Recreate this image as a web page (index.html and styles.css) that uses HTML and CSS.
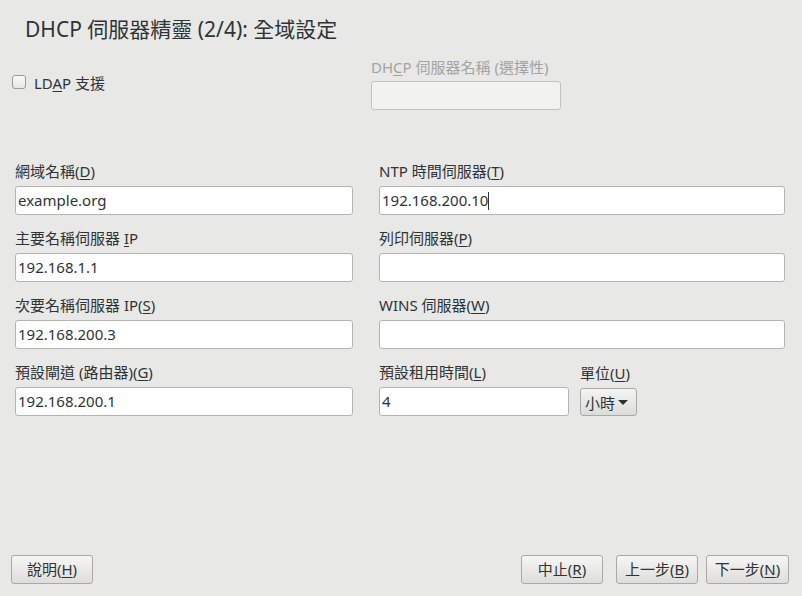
FILE: index.html
```html
<!DOCTYPE html>
<html>
<head>
<meta charset="utf-8">
<link rel="stylesheet" href="styles.css">
</head>
<body>
<div class="page">
  <h1 class="title">DHCP 伺服器精靈 (2/4): 全域設定</h1>
  <div class="top">
    <label class="check">
      <span class="box"></span>
      <span>LD<u>A</u>P 支援</span>
    </label>
    <div class="group disabled">
      <div class="label">DH<u>C</u>P 伺服器名稱 (選擇性)</div>
      <div class="field dfield"></div>
    </div>
  </div>
  <div class="form">
    <div class="col left">
      <div class="group">
        <div class="label">網域名稱(<u>D</u>)</div>
        <div class="field">example.org</div>
      </div>
      <div class="group">
        <div class="label">主要名稱伺服器 <u>I</u>P</div>
        <div class="field">192.168.1.1</div>
      </div>
      <div class="group">
        <div class="label">次要名稱伺服器 IP(<u>S</u>)</div>
        <div class="field">192.168.200.3</div>
      </div>
      <div class="group">
        <div class="label">預設閘道 (路由器)(<u>G</u>)</div>
        <div class="field">192.168.200.1</div>
      </div>
    </div>
    <div class="col right">
      <div class="group">
        <div class="label">NTP 時間伺服器(<u>T</u>)</div>
        <div class="field">192.168.200.10<span class="caret"></span></div>
      </div>
      <div class="group">
        <div class="label">列印伺服器(<u>P</u>)</div>
        <div class="field"></div>
      </div>
      <div class="group">
        <div class="label">WINS 伺服器(<u>W</u>)</div>
        <div class="field"></div>
      </div>
      <div class="lease-row">
        <div class="group lease">
          <div class="label">預設租用時間(<u>L</u>)</div>
          <div class="field">4</div>
        </div>
        <div class="group unit">
          <div class="label">單位(<u>U</u>)</div>
          <div class="combo">小時<span class="arrow"></span></div>
        </div>
      </div>
    </div>
  </div>
  <div class="buttons">
    <button class="btn">說明(<u>H</u>)</button>
    <div class="right-btns">
      <button class="btn">中止(<u>R</u>)</button>
      <button class="btn back">上一步(<u>B</u>)</button>
      <button class="btn next">下一步(<u>N</u>)</button>
    </div>
  </div>
</div>
</body>
</html>
```
FILE: styles.css
```css
html, body {
  margin: 0;
  padding: 0;
  background: #e8e8e7;
}
body {
  font-family: "Noto Sans", "Noto Sans CJK TC", sans-serif;
  font-size: 15px;
  color: #2e3436;
}
u {
  text-decoration: underline;
  text-underline-offset: 2px;
  text-decoration-thickness: 1px;
}
.page {
  width: 802px;
  height: 596px;
  display: flex;
  flex-direction: column;
  box-sizing: border-box;
}
.title {
  margin: 0;
  padding: 15px 0 0 25px;
  font-size: 21px;
  font-weight: normal;
  line-height: 28px;
  color: #2e3436;
}
.top {
  display: flex;
  padding: 15px 0 0 12px;
  height: 104px;
  box-sizing: border-box;
}
.check {
  display: flex;
  align-items: center;
  gap: 8px;
  width: 359px;
  height: 18px;
  margin-top: 15px;
}
.box {
  width: 12px;
  height: 12px;
  border: 1px solid #9a9a98;
  border-radius: 3px;
  background: linear-gradient(#fafafa, #e6e6e5);
}
.group {
  display: flex;
  flex-direction: column;
}
.label {
  height: 18px;
  line-height: 18px;
  margin-bottom: 6px;
  white-space: nowrap;
}
.disabled .label {
  color: #a3a3a1;
  margin-bottom: 5px;
}
.field {
  height: 29px;
  box-sizing: border-box;
  border: 1px solid #b4b4b1;
  border-radius: 3px;
  background: #ffffff;
  padding: 0 2px;
  line-height: 27px;
  white-space: nowrap;
}
.dfield {
  width: 190px;
  background: #f2f2f1;
  border-color: #c2c2bf;
}
.caret {
  display: inline-block;
  width: 1px;
  height: 18px;
  background: #2e3436;
  vertical-align: -4px;
}
.form {
  display: grid;
  grid-template-columns: 338px 406px;
  column-gap: 26px;
  padding: 0 0 0 15px;
  margin-top: 15px;
}
.col {
  display: flex;
  flex-direction: column;
  gap: 14px;
}
.lease-row {
  display: flex;
  gap: 11px;
}
.lease {
  width: 190px;
}
.unit .label {
  margin-top: 1px;
  margin-bottom: 6px;
}
.combo {
  width: 57px;
  height: 28px;
  box-sizing: border-box;
  border: 1px solid #a9a9a6;
  border-radius: 3px;
  background: linear-gradient(#f4f4f3, #dcdcda);
  display: flex;
  align-items: center;
  padding-left: 4px;
  gap: 3px;
}
.arrow {
  width: 0;
  height: 0;
  border-left: 5px solid transparent;
  border-right: 5px solid transparent;
  border-top: 5px solid #2e3436;
}
.buttons {
  margin-top: auto;
  display: flex;
  justify-content: space-between;
  padding: 0 13px 12px 11px;
}
.right-btns {
  display: flex;
  gap: 13px;
}
.btn {
  font-family: "Noto Sans", "Noto Sans CJK TC", sans-serif;
  font-size: 15px;
  color: #2e3436;
  width: 82px;
  height: 29px;
  box-sizing: border-box;
  border: 1px solid #a9a9a6;
  border-radius: 3px;
  background: linear-gradient(#f6f6f5, #dedddb);
  padding: 0;
  line-height: 27px;
}
.next {
  width: 83px;
  margin-left: -5px;
}
```
